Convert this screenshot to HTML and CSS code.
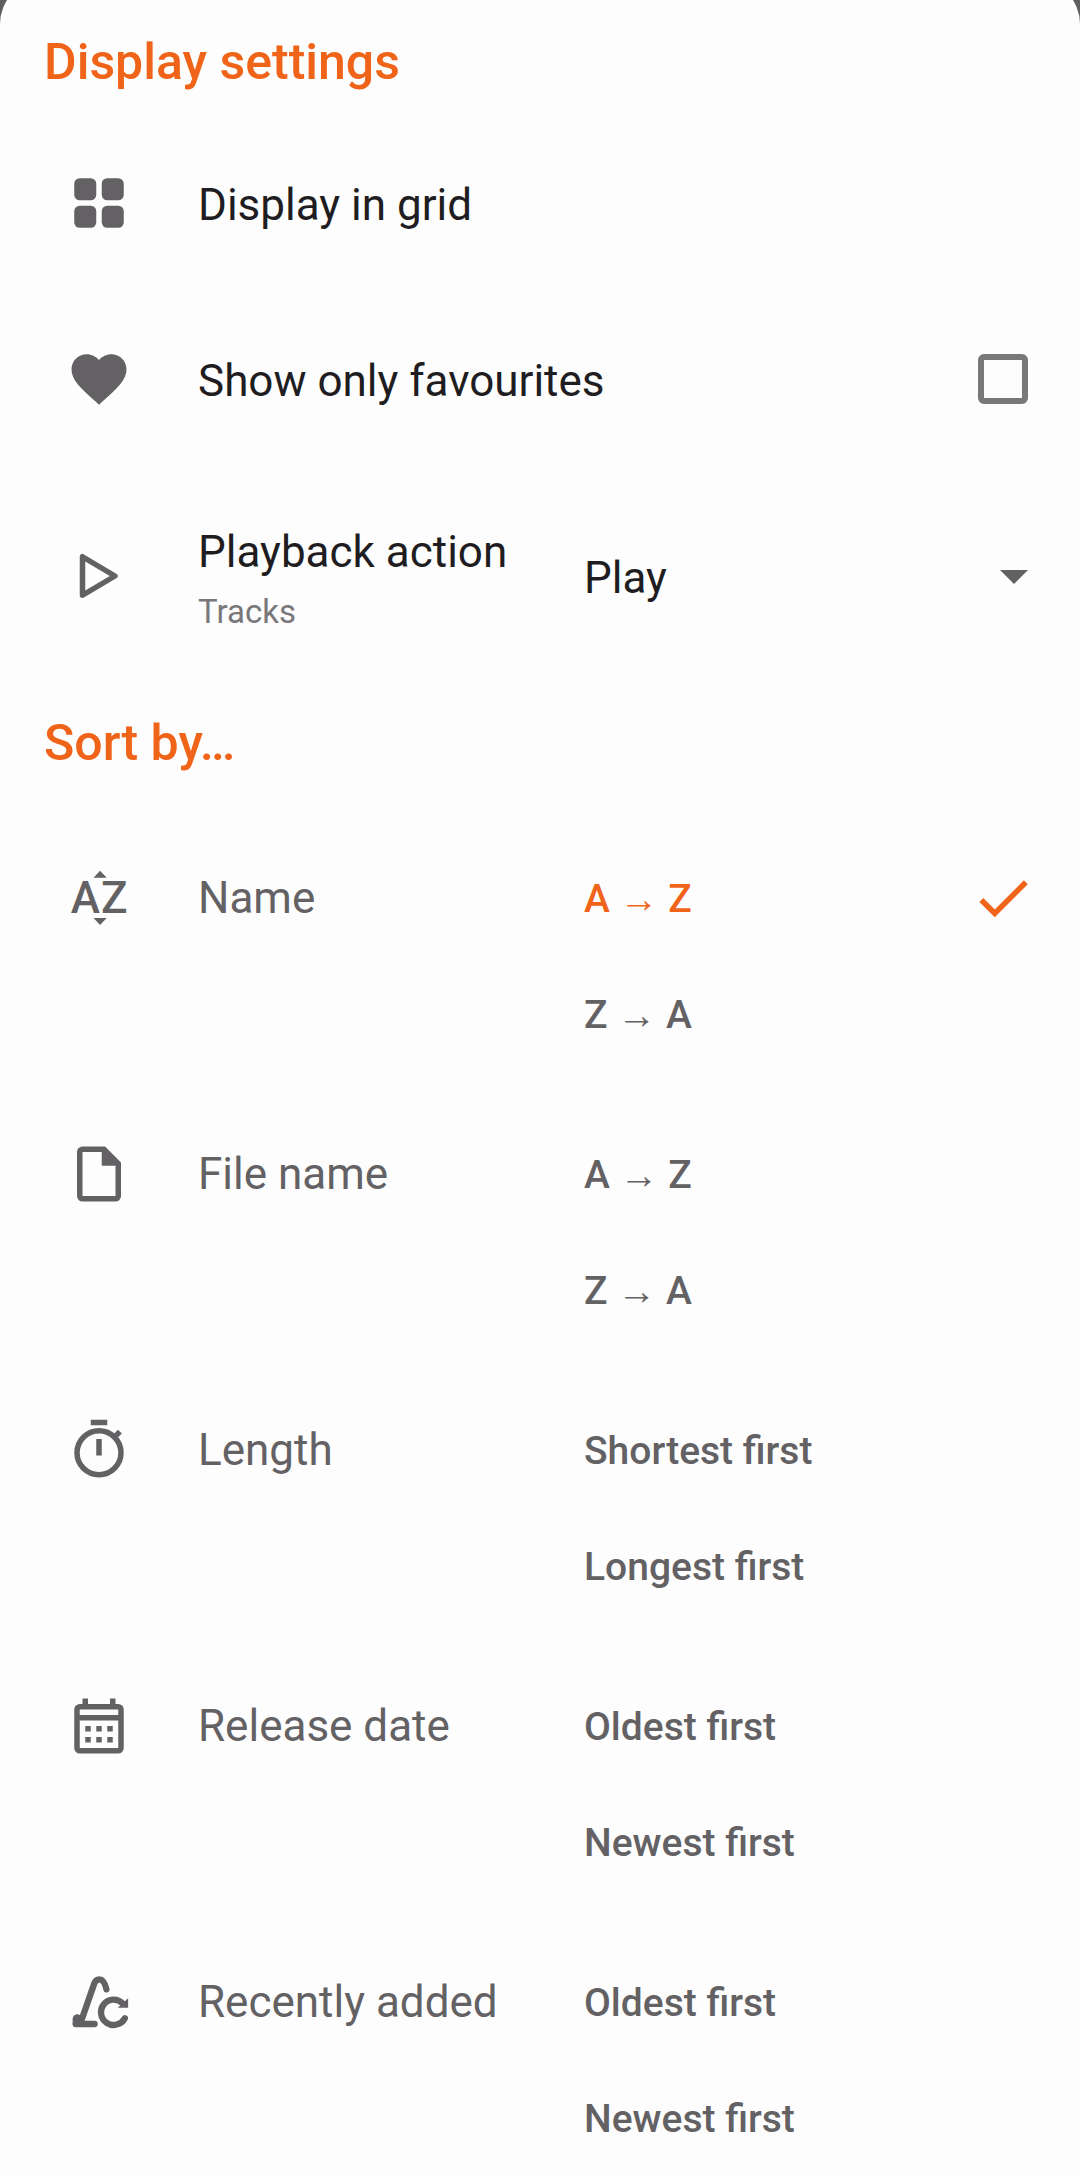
FILE: index.html
```html
<!DOCTYPE html>
<html lang="en">

<head>
  <meta charset="UTF-8">
  <meta name="viewport" content="width=device-width, initial-scale=1.0">
  <title>Display settings</title>
  <link rel="stylesheet" href="styles.css">
</head>

<body>
  <main class="sheet">
    <section>
      <h2>Display settings</h2>

      <button class="row" type="button">
        <svg class="icon" viewBox="0 0 24 24">
          <rect x="3" y="3" width="8" height="8" rx="2" />
          <rect x="13" y="3" width="8" height="8" rx="2" />
          <rect x="3" y="13" width="8" height="8" rx="2" />
          <rect x="13" y="13" width="8" height="8" rx="2" />
        </svg>
        <span class="label">Display in grid</span>
      </button>

      <div class="row">
        <svg class="icon" viewBox="0 0 24 24">
          <path d="M12 21.35l-1.45-1.32C5.4 15.36 2 12.28 2 8.5 2 5.42 4.42 3 7.5 3c1.74 0 3.41.81 4.5 2.09C13.09 3.81 14.76 3 16.5 3 19.58 3 22 5.42 22 8.5c0 3.78-3.4 6.86-8.55 11.54L12 21.35z" />
        </svg>
        <label class="label" for="favourites">Show only favourites</label>
        <input class="checkbox" type="checkbox" id="favourites">
      </div>

      <div class="row row-tall">
        <svg class="icon" viewBox="0 0 24 24">
          <path class="line" d="M6 5v14l11.8-7z" />
        </svg>
        <label class="label label-narrow" for="playback">
          Playback action
          <small>Tracks</small>
        </label>
        <div class="dropdown">
          <select id="playback">
            <option>Play</option>
            <option>Play all</option>
            <option>Add to queue</option>
          </select>
          <svg class="arrow" viewBox="0 0 10 5"><path d="M0 0l5 5 5-5z" /></svg>
        </div>
      </div>
    </section>

    <section>
      <h2>Sort by…</h2>

      <div class="sort-group">
        <div class="sort-name">
          <svg class="icon" viewBox="0 0 24 24">
            <path d="M12.4 2.1L14.8 4.6H10zM10 19.3h4.8l-2.4 2.5z" />
            <text x="1.7" y="17.5">A</text>
            <text x="12.7" y="17.5">Z</text>
          </svg>
          <span>Name</span>
        </div>
        <div class="options">
          <label class="option">
            <input type="radio" name="sort" checked>
            <span>A → Z</span>
            <svg class="check" viewBox="0 0 24 24"><path d="M9 16.17L4.83 12l-1.42 1.41L9 19 21 7l-1.41-1.41z" /></svg>
          </label>
          <label class="option">
            <input type="radio" name="sort">
            <span>Z → A</span>
          </label>
        </div>
      </div>

      <div class="sort-group">
        <div class="sort-name">
          <svg class="icon" viewBox="0 0 24 24">
            <path fill-rule="evenodd" d="M6 2h8.2L20 7.8V20a2 2 0 0 1-2 2H6a2 2 0 0 1-2-2V4a2 2 0 0 1 2-2zM6 4v16h12V9h-5V4z" />
          </svg>
          <span>File name</span>
        </div>
        <div class="options">
          <label class="option">
            <input type="radio" name="sort">
            <span>A → Z</span>
          </label>
          <label class="option">
            <input type="radio" name="sort">
            <span>Z → A</span>
          </label>
        </div>
      </div>

      <div class="sort-group">
        <div class="sort-name">
          <svg class="icon" viewBox="0 0 24 24">
            <path d="M9 1h6v2H9zM11 8h2v6h-2z" />
            <circle class="line" cx="12" cy="13" r="8" />
            <path class="line" d="M17.6 7.3l2-2" />
          </svg>
          <span>Length</span>
        </div>
        <div class="options">
          <label class="option">
            <input type="radio" name="sort">
            <span>Shortest first</span>
          </label>
          <label class="option">
            <input type="radio" name="sort">
            <span>Longest first</span>
          </label>
        </div>
      </div>

      <div class="sort-group">
        <div class="sort-name">
          <svg class="icon" viewBox="0 0 24 24">
            <path fill-rule="evenodd" d="M6 2h2v2h8V2h2v2h1a2 2 0 0 1 2 2v14a2 2 0 0 1-2 2H5a2 2 0 0 1-2-2V6a2 2 0 0 1 2-2h1zM5 6v2h14V6zM5 10v10h14V10z" />
            <path d="M7 12h2v2H7zM11 12h2v2h-2zM15 12h2v2h-2zM7 16h2v2H7zM11 16h2v2h-2zM15 16h2v2h-2z" />
          </svg>
          <span>Release date</span>
        </div>
        <div class="options">
          <label class="option">
            <input type="radio" name="sort">
            <span>Oldest first</span>
          </label>
          <label class="option">
            <input type="radio" name="sort">
            <span>Newest first</span>
          </label>
        </div>
      </div>

      <div class="sort-group">
        <div class="sort-name">
          <svg class="icon" viewBox="0 0 24 24">
            <path class="line round" d="M14.7 7.4C14.2 5.2 13.3 3.8 12.1 3.8c-1.1 0-1.6.8-1.9 1.7L5.5 19" />
            <path class="line round" d="M3.6 20h6.8" />
            <path d="M2.4 18.4c0-1.3 1-2 2.1-1.9l2.2.8-.8 3.7H3.4c-.7 0-1-.4-1-1z" />
            <path class="line round" d="M21.4 17.9a4.6 4.6 0 1 1-.8-5.4" />
            <path d="M22.6 10.6v3.5h-3.8z" />
          </svg>
          <span>Recently added</span>
        </div>
        <div class="options">
          <label class="option">
            <input type="radio" name="sort">
            <span>Oldest first</span>
          </label>
          <label class="option">
            <input type="radio" name="sort">
            <span>Newest first</span>
          </label>
        </div>
      </div>
    </section>
  </main>
</body>

</html>
```

FILE: styles.css
```css
* {
  box-sizing: border-box;
}

body {
  margin: 0;
  height: 100vh;
  overflow: hidden;
  background: #605e61;
  color: #1f1d21;
  font-family: Roboto, "Noto Sans", sans-serif;
  font-size: 44px;
  line-height: 60px;
}

/* the sheet is dragged up a little past the top edge */
.sheet {
  height: calc(100vh + 20px);
  margin-top: -20px;
  padding-top: 24px;
  overflow-y: auto;
  scrollbar-width: none;
  background: #fdfdfd;
  border-radius: 44px 44px 0 0;
}

h2 {
  margin: 0;
  padding: 28px 44px 23px;
  color: #f06419;
  font-size: 50px;
  font-weight: 500;
}

.row {
  display: flex;
  align-items: center;
  gap: 66px;
  width: 100%;
  min-height: 176px;
  padding: 0 52px 0 66px;
  border: none;
  background: none;
  color: inherit;
  font: inherit;
  text-align: left;
}

.row-tall {
  min-height: 218px;
}

.icon {
  flex: none;
  width: 66px;
  height: 66px;
  fill: #636164;
}

.icon .line {
  fill: none;
  stroke: #636164;
  stroke-width: 2;
  stroke-linejoin: round;
}

.icon .round {
  stroke-width: 2.3;
  stroke-linecap: round;
}

.icon text {
  font-size: 16px;
  font-weight: 500;
}

.label {
  flex: 1;
  padding-top: 4px;
}

.label-narrow {
  flex: none;
  width: 320px;
}

.label small {
  display: block;
  margin-top: 8px;
  color: #79777a;
  font-size: 33px;
  line-height: 44px;
}

.checkbox {
  width: 50px;
  height: 50px;
  margin: 0;
  appearance: none;
  border: 6px solid #79777a;
  border-radius: 6px;
}

.checkbox:checked {
  border-color: #f06419;
  background: #f06419;
}

.dropdown {
  position: relative;
  flex: 1;
}

.dropdown select {
  width: 100%;
  padding: 4px 0 0;
  appearance: none;
  border: none;
  background: none;
  color: inherit;
  font: inherit;
}

.arrow {
  position: absolute;
  top: 50%;
  right: 0;
  width: 28px;
  height: 14px;
  margin-top: -6px;
  fill: #636164;
  pointer-events: none;
}

.sort-group {
  display: flex;
  gap: 66px;
  padding: 44px 44px 0 66px;
  color: #636164;
}

.sort-name {
  display: flex;
  flex: none;
  align-items: center;
  gap: 66px;
  width: 452px;
  height: 116px;
}

.options {
  flex: 1;
}

.option {
  display: flex;
  align-items: center;
  justify-content: space-between;
  height: 116px;
  font-size: 39px;
  font-weight: 500;
  cursor: pointer;
}

.option span {
  padding-top: 2px;
}

.option input {
  position: absolute;
  opacity: 0;
}

.option input:checked + span {
  color: #f06419;
}

.check {
  width: 66px;
  height: 66px;
  fill: #f06419;
}
```
